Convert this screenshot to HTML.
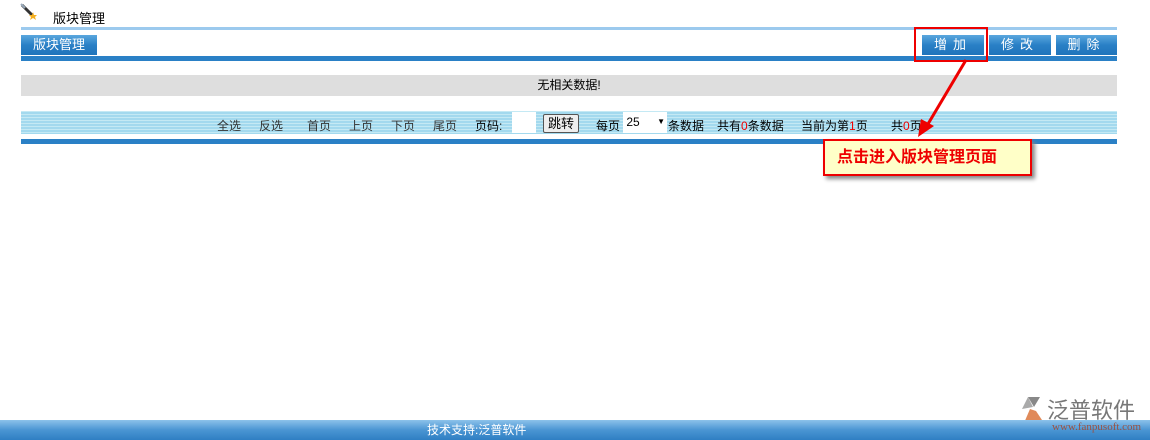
<!DOCTYPE html><html><head><meta charset="utf-8"><style>
body{margin:0;width:1150px;height:440px;position:relative;background:#fff;font-family:"Liberation Sans","Noto Sans CJK SC",sans-serif;font-size:12px;overflow:hidden}
.a{position:absolute}
.btn{position:absolute;top:35px;height:20px;background:linear-gradient(#5aa7de,#2a80c6 50%,#1f74bb);color:#fff;font-size:13px;line-height:20px;text-align:center;letter-spacing:6px}
.stripe{background:repeating-linear-gradient(#c4e9f4 0 1px,#a3d9ee 1px 3px)}
.p{position:absolute;top:117px;font-size:12px;color:#333}
</style></head><body>
<svg class="a" style="left:20px;top:3px" width="20" height="18"><line x1="2" y1="2" x2="12" y2="12" stroke="#333" stroke-width="3"/><line x1="1" y1="1" x2="5" y2="5" stroke="#9ab" stroke-width="2"/><path d="M13 9l1 3 3 0-2 2 1 3-3-2-3 2 1-3-2-2 3 0z" fill="#f5b020"/></svg>
<div class="a" style="left:53px;top:8px;font-size:13px">版块管理</div>
<div class="a" style="left:21px;top:27px;width:1096px;height:3px;background:#9ccaee"></div>
<div class="btn" style="left:21px;width:76px;letter-spacing:0">版块管理</div>
<div class="a" style="left:21px;top:56px;width:1096px;height:5px;background:#2a80c6"></div>
<div class="btn" style="left:922px;width:62px">增加</div>
<div class="btn" style="left:989px;width:62px">修改</div>
<div class="btn" style="left:1056px;width:61px">删除</div>
<div class="a" style="left:914px;top:27px;width:70px;height:31px;border:2px solid #e00"></div>
<div class="a" style="left:21px;top:75px;width:1096px;height:21px;background:#dedede;text-align:center;line-height:21px">无相关数据!</div>
<div class="a stripe" style="left:21px;top:111px;width:1096px;height:23px"></div>
<div class="p" style="left:217px">全选</div><div class="p" style="left:259px">反选</div>
<div class="p" style="left:307px">首页</div><div class="p" style="left:349px">上页</div>
<div class="p" style="left:391px">下页</div><div class="p" style="left:433px">尾页</div>
<div class="p" style="left:475px;color:#000">页码:</div>
<div class="a" style="left:512px;top:112px;width:24px;height:21px;background:#fff"></div>
<div class="a" style="left:543px;top:114px;width:34px;height:17px;border:1px solid #555;border-radius:2px;background:#eee;text-align:center;line-height:17px;font-size:13px">跳转</div>
<div class="p" style="left:596px;color:#000">每页</div>
<div class="a" style="left:623px;top:112px;width:44px;height:21px;background:#fff;line-height:20px;font-size:12px">&nbsp;25<span style="position:absolute;right:2px;font-size:8px">▼</span></div>
<div class="p" style="left:668px;color:#000">条数据</div>
<div class="p" style="left:717px;color:#000">共有<span style="color:#e00">0</span>条数据</div>
<div class="p" style="left:801px;color:#000">当前为第<span style="color:#e00">1</span>页</div>
<div class="p" style="left:891px;color:#000">共<span style="color:#e00">0</span>页</div>
<div class="a" style="left:21px;top:139px;width:1096px;height:5px;background:#2a80c6"></div>
<svg class="a" style="left:0;top:0" width="1150" height="440"><line x1="966" y1="60" x2="928" y2="124" stroke="#e00" stroke-width="3"/><path d="M918 137l3-18 13 7z" fill="#e00"/></svg>
<div class="a" style="left:823px;top:139px;width:205px;height:33px;border:2px solid #e00;background:#ffffc8;box-shadow:3px 3px 4px #888;color:#e00;font-weight:bold;font-size:16px;line-height:33px;text-indent:12px">点击进入版块管理页面</div>
<svg class="a" style="left:1020px;top:395px" width="26" height="30"><path d="M8 2h12l-6 10z" fill="#888"/><path d="M2 14l6-12 5 10z" fill="#aaa"/><path d="M4 28l6-14 6 2 8 12z" fill="#e08a5a"/></svg>
<div class="a" style="left:1047px;top:393px;font-size:22px;color:#777">泛普软件</div>
<div class="a" style="left:1052px;top:421px;font-size:11px;color:#9a5040;font-family:'Liberation Serif',serif;z-index:2">www.fanpusoft.com</div>
<div class="a" style="left:0;top:420px;width:1150px;height:20px;background:linear-gradient(#8cc2ea,#4a95d3 50%,#2f7fc3);color:#fff;line-height:20px"><span style="margin-left:427px">技术支持:泛普软件</span></div>
</body></html>
